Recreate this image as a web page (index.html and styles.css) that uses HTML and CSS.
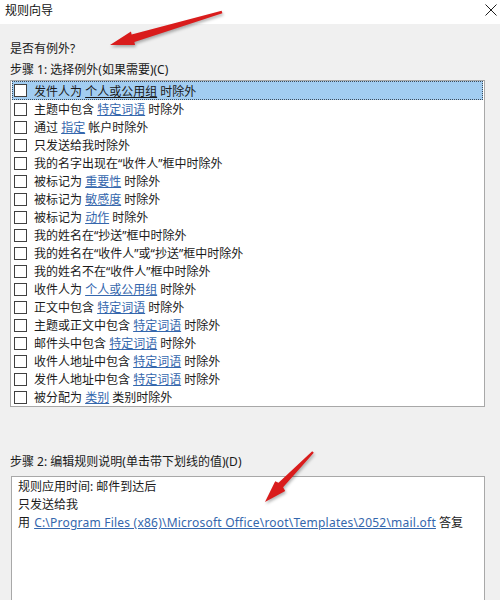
FILE: index.html
```html
<!DOCTYPE html>
<html lang="zh-CN">
<head>
<meta charset="utf-8">
<title>规则向导</title>
<link rel="stylesheet" href="styles.css">
</head>
<body>
<div class="window">
  <div class="titlebar">
    <span class="title">规则向导</span>
    <svg class="close" width="12" height="12" viewBox="0 0 12 12"><path d="M0.5 0.5 L11.5 11.5 M11.5 0.5 L0.5 11.5" stroke="#1e1e1e" stroke-width="1" fill="none"/></svg>
  </div>
  <div class="content">
    <div class="label">是否有例外?</div>
    <div class="label step1">步骤 1: 选择例外(如果需要)(C)</div>
    <div class="listbox">
      <div class="row selected"><span class="cb"></span><span>发件人为 <u class="sel-link">个人或公用组</u> 时除外</span></div>
      <div class="row"><span class="cb"></span><span>主题中包含 <u class="link">特定词语</u> 时除外</span></div>
      <div class="row"><span class="cb"></span><span>通过 <u class="link">指定</u> 帐户时除外</span></div>
      <div class="row"><span class="cb"></span><span>只发送给我时除外</span></div>
      <div class="row"><span class="cb"></span><span>我的名字出现在“收件人”框中时除外</span></div>
      <div class="row"><span class="cb"></span><span>被标记为 <u class="link">重要性</u> 时除外</span></div>
      <div class="row"><span class="cb"></span><span>被标记为 <u class="link">敏感度</u> 时除外</span></div>
      <div class="row"><span class="cb"></span><span>被标记为 <u class="link">动作</u> 时除外</span></div>
      <div class="row"><span class="cb"></span><span>我的姓名在“抄送”框中时除外</span></div>
      <div class="row"><span class="cb"></span><span>我的姓名在“收件人”或“抄送”框中时除外</span></div>
      <div class="row"><span class="cb"></span><span>我的姓名不在“收件人”框中时除外</span></div>
      <div class="row"><span class="cb"></span><span>收件人为 <u class="link">个人或公用组</u> 时除外</span></div>
      <div class="row"><span class="cb"></span><span>正文中包含 <u class="link">特定词语</u> 时除外</span></div>
      <div class="row"><span class="cb"></span><span>主题或正文中包含 <u class="link">特定词语</u> 时除外</span></div>
      <div class="row"><span class="cb"></span><span>邮件头中包含 <u class="link">特定词语</u> 时除外</span></div>
      <div class="row"><span class="cb"></span><span>收件人地址中包含 <u class="link">特定词语</u> 时除外</span></div>
      <div class="row"><span class="cb"></span><span>发件人地址中包含 <u class="link">特定词语</u> 时除外</span></div>
      <div class="row"><span class="cb"></span><span>被分配为 <u class="link">类别</u> 类别时除外</span></div>
    </div>
    <div class="label step2">步骤 2: 编辑规则说明(单击带下划线的值)(D)</div>
    <div class="descbox">
      <div class="line">规则应用时间: 邮件到达后</div>
      <div class="line">只发送给我</div>
      <div class="line">用 <u class="link path">C:\Program Files (x86)\Microsoft Office\root\Templates\2052\mail.oft</u> 答复</div>
    </div>
  </div>
  <svg class="annot" width="500" height="600" viewBox="0 0 500 600">
    <polygon points="222.4,13.3 221.6,10.7 131.6,34.5 131,31.5 110,45 135,44.9 134.4,41.9" fill="#d91c1c"/>
    <polygon points="313.8,452.7 312.2,451.3 278.5,482.8 275.2,481.2 265,502 285.2,491 283.1,487.2" fill="#d91c1c"/>
  </svg>
</div>
</body>
</html>
```

FILE: styles.css
```css
html, body {
  margin: 0;
  padding: 0;
}
body {
  width: 500px;
  height: 600px;
  overflow: hidden;
  background: #f0f0f0;
  font-family: "Noto Sans", "Noto Sans CJK SC", sans-serif;
  font-size: 12px;
  color: #1a1a1a;
}
.window {
  position: relative;
  width: 500px;
  height: 600px;
}
.titlebar {
  height: 24px;
  background: #ffffff;
  display: flex;
  align-items: center;
  justify-content: space-between;
  padding: 0 3px 0 5px;
  box-sizing: border-box;
}
.title {
  font-size: 12px;
  line-height: 20px;
  margin-top: -3px;
  color: #111;
}
.close {
  display: block;
  margin-top: -4px;
}
.content {
  padding: 16px 15px 0 10px;
}
.label {
  line-height: 18px;
  height: 18px;
  white-space: nowrap;
}
.step1 {
  margin-top: 3px;
  margin-bottom: 1px;
}
.step2 {
  margin-top: 46px;
  margin-bottom: 5px;
}
.listbox {
  background: #ffffff;
  border: 1px solid #a8a8a8;
  padding: 1px 0 0 0;
  height: 324px;
}
.row {
  height: 18px;
  display: flex;
  align-items: center;
  box-sizing: border-box;
  padding-left: 2px;
  white-space: nowrap;
  margin: 0 1px;
}
.row.selected {
  background: #a2cdf1;
  outline: 1px dotted #3c4a58;
  outline-offset: -1px;
  height: 19px;
  margin-top: -1px;
}
.cb {
  width: 11px;
  height: 11px;
  border: 1px solid #404040;
  background: #ffffff;
  margin-right: 7px;
  flex: none;
}
.link {
  color: #3567ad;
  text-decoration: underline;
}
.path {
  letter-spacing: 0.22px;
  margin-left: 1px;
}
.sel-link {
  color: #1a1a1a;
  text-decoration: underline;
}
.descbox {
  background: #ffffff;
  border: 1px solid #a8a8a8;
  border-bottom: none;
  margin-left: 1px;
  height: 130px;
  padding: 1px 6px 0 6px;
}
.line {
  line-height: 18px;
  height: 18px;
  white-space: nowrap;
}
.annot {
  position: absolute;
  left: 0;
  top: 0;
  pointer-events: none;
  filter: drop-shadow(1px 2px 1.5px rgba(0, 0, 0, 0.3));
}
```
